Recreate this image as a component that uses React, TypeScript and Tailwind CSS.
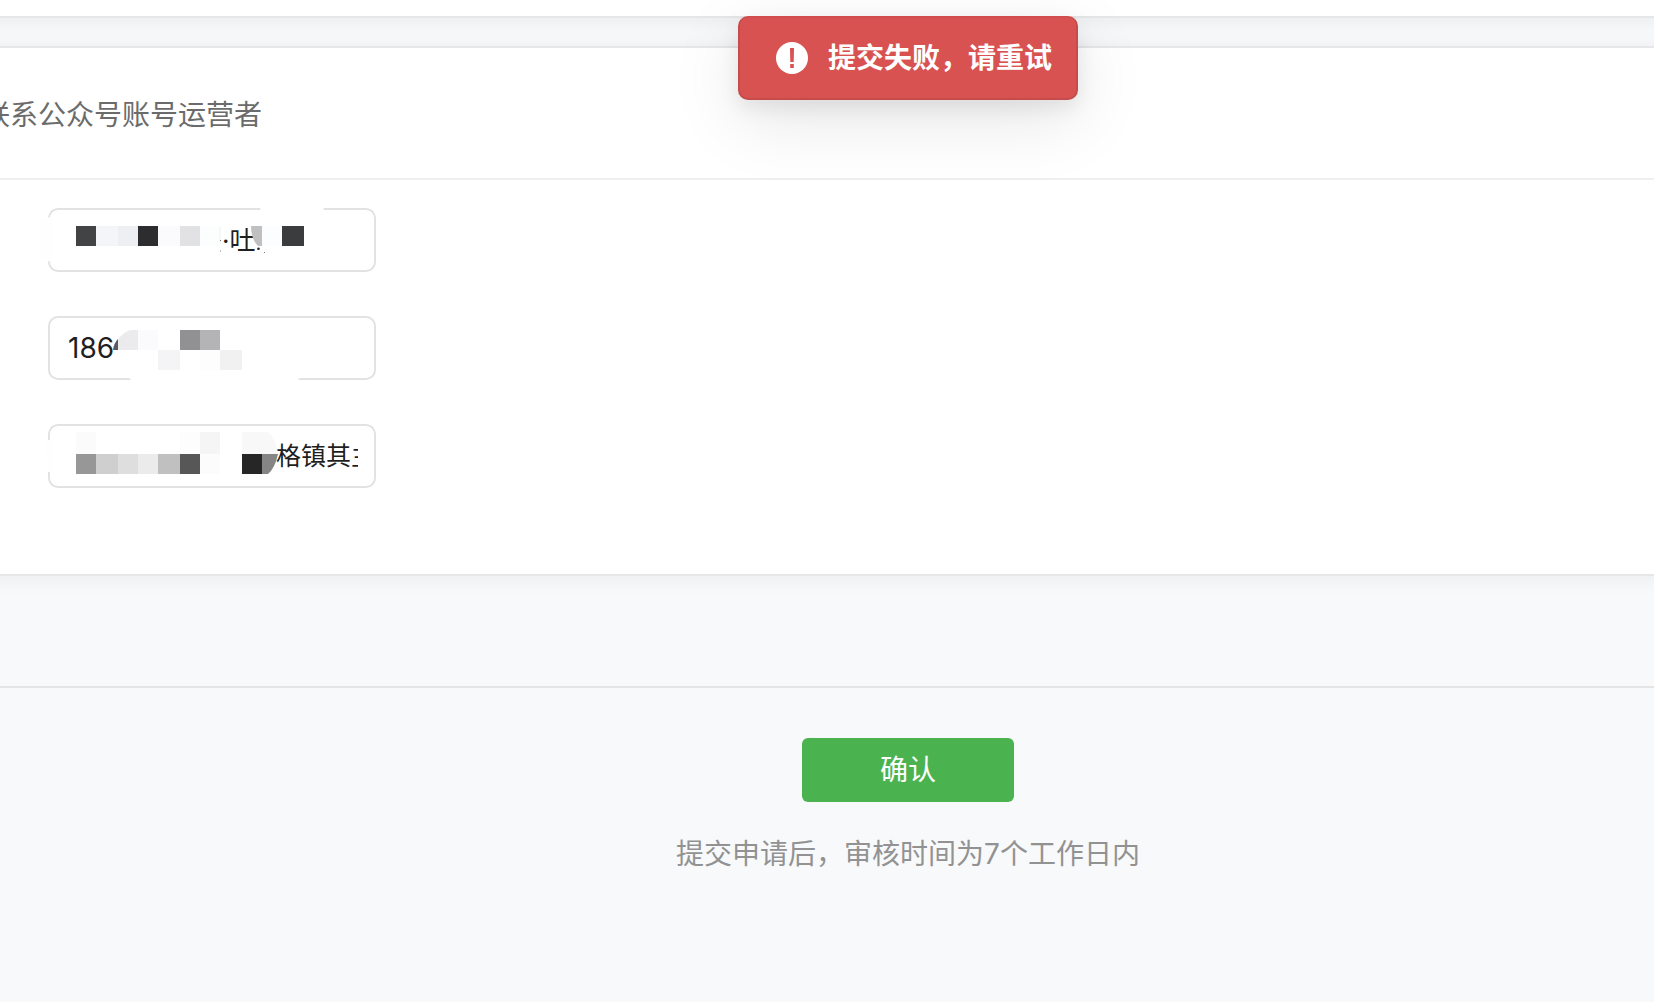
import { useState } from 'react';
import type { FormEvent, ReactNode } from 'react';

interface FieldProps {
  name: string;
  label: string;
  defaultValue: string;
  textStyle: string;
  viewBox: string;
  children: ReactNode;
}

// [x, y, width, height, fill]
type Block = [number, number, number, number, string];

const nameBlocks: Block[] = [
  [76, 226, 20, 20, '#424345'],
  [96, 226, 22, 20, '#f4f5f8'],
  [118, 226, 20, 20, '#eeeff2'],
  [138, 226, 20, 20, '#2d2d2f'],
  [158, 226, 22, 20, '#fbfbfe'],
  [180, 226, 20, 20, '#e2e2e4'],
  [200, 226, 20, 20, '#fcfefe'],
  [262, 226, 20, 20, '#fcfdfe'],
  [282, 226, 22, 20, '#3b3c3e'],
];

const phoneBlocks: Block[] = [
  [138, 330, 20, 20, '#fbfbfe'],
  [180, 330, 20, 20, '#919193'],
  [200, 330, 20, 20, '#b4b4b6'],
  [158, 350, 22, 20, '#f4f4f7'],
  [200, 350, 20, 20, '#fdfdfd'],
  [220, 350, 22, 20, '#f1f1f1'],
];

const addressBlocks: Block[] = [
  [76, 432, 20, 22, '#fbfbfb'],
  [180, 432, 20, 22, '#fdfdfd'],
  [200, 432, 20, 22, '#f5f5f5'],
  [76, 454, 20, 20, '#979797'],
  [96, 454, 22, 20, '#cfcfcf'],
  [118, 454, 20, 20, '#dedede'],
  [138, 454, 20, 20, '#ebebeb'],
  [158, 454, 22, 20, '#c0c0c0'],
  [180, 454, 20, 20, '#575757'],
  [200, 454, 20, 20, '#fcfcfc'],
  [242, 454, 20, 20, '#262626'],
];

function Mosaic({ blocks }: { blocks: Block[] }) {
  return (
    <>
      {blocks.map(([x, y, width, height, fill]) => (
        <rect key={`${x}-${y}`} x={x} y={y} width={width} height={height} fill={fill} />
      ))}
    </>
  );
}

function Field({ name, label, defaultValue, textStyle, viewBox, children }: FieldProps) {
  return (
    <div className="relative w-[328px]">
      <input
        id={name}
        name={name}
        aria-label={label}
        defaultValue={defaultValue}
        className={`block h-16 w-full rounded-[10px] border-2 border-[#e2e2e2] bg-white pr-4 text-[#1f1f1f] outline-none ${textStyle}`}
      />
      <svg
        className="pointer-events-none absolute -top-2 -left-2 h-20 w-[344px]"
        viewBox={viewBox}
        aria-hidden="true"
      >
        {children}
      </svg>
    </div>
  );
}

function Toast({ message }: { message: string }) {
  return (
    <div className="pointer-events-none absolute inset-x-0 top-4 flex justify-center pl-[162px]">
      <div
        role="alert"
        className="flex h-[84px] items-center gap-5 rounded-[10px] border-2 border-[#c64b4b] border-t-[#d04e4e] bg-[#d95252] pr-6 pl-9 text-[28px] leading-10 font-semibold text-white shadow-[0_20px_70px_rgba(0,0,0,0.1),0_8px_20px_rgba(0,0,0,0.08)]"
      >
        <svg className="h-8 w-8" viewBox="0 0 32 32" aria-hidden="true">
          <circle cx="16" cy="16" r="16" fill="#fff" />
          <path d="M14 6h4l-.3 14h-3.400zM14.200 22h3.600v4h-3.600z" fill="#d95252" />
        </svg>
        <span>{message}</span>
      </div>
    </div>
  );
}

export default function App() {
  const [error, setError] = useState('提交失败，请重试');

  const handleSubmit = (e: FormEvent) => {
    e.preventDefault();
    setError('提交失败，请重试');
  };

  return (
    <div className="relative min-h-screen overflow-hidden bg-[#f8f9fb] font-['Inter','Noto_Sans_CJK_SC',sans-serif]">
      <div className="-mx-6 h-[18px] border-b-2 border-[#e5e6e8] bg-white shadow-[0_2px_20px_rgba(0,0,0,0.07)]" />

      <form onSubmit={handleSubmit}>
        <section className="-mx-6 mt-7 border-y-2 border-[#e7e7e9] bg-white px-6 shadow-[0_2px_20px_rgba(0,0,0,0.06)]">
          <h2 className="-mx-[42px] border-b-2 border-[#efefef] px-6 pt-[47px] pb-[43px] text-[28px] leading-10 font-normal whitespace-nowrap text-[#6b6b6b]">
            联系公众号账号运营者
          </h2>

          <div className="flex flex-col gap-11 px-12 pt-7 pb-[86px]">
            <Field
              name="name"
              label="姓名"
              defaultValue="·吐"
              textStyle="pb-1 pl-[172px] text-[26px]"
              viewBox="40 200 344 80"
            >
              <path d="M40 222q6-5 12-5v45q-8-1-12-6z" fill="#fefefe" />
              <path d="M259 212q1-3 3-6h60q1 1 3 6z" fill="#fff" />
              <Mosaic blocks={nameBlocks} />
              <path d="M251 226h11v20h-4q-7-7-7-20z" fill="#c0c0c0" />
              <path d="M220 227v17" stroke="#f0f0f0" />
              <circle cx="258.500" cy="248.800" r="1.300" fill="#222" />
              <path d="M220 240.500h1M220 251h1M264 252.500h1" stroke="#777" />
            </Field>

            <Field
              name="phone"
              label="手机号"
              defaultValue="186"
              textStyle="pl-[18px] text-[28px]"
              viewBox="40 308 344 80"
            >
              <path d="M127 374h176q-3 4-6 7H132q-3-3-5-7z" fill="#fff" />
              <path d="M113 330v36h12v-36z" fill="#fff" />
              <path d="M118 339v11h-5q1-7 5-11z" fill="#5a5a5c" />
              <path d="M118 339q8-9 14-9h6v20h-20z" fill="#ebebed" />
              <Mosaic blocks={phoneBlocks} />
            </Field>

            <Field
              name="address"
              label="地址"
              defaultValue="格镇其主"
              textStyle="pb-1 pl-[226px] text-[25px]"
              viewBox="40 416 344 80"
            >
              <path d="M46 440h6v32h-4q-2-14-2-32z" fill="#fefefe" />
              <Mosaic blocks={addressBlocks} />
              <path d="M242 432h26q8 7 10 22h-36z" fill="#f8f8f8" />
              <path d="M262 454h16q-3 14-10 20h-6z" fill="#858585" />
            </Field>
          </div>
        </section>

        <footer className="mt-[110px] flex flex-col items-center gap-8 border-t-2 border-[#e5e5e5] pt-[50px] pb-12 pl-[162px]">
          <button
            type="submit"
            className="h-16 w-[212px] rounded-md bg-[#4ab350] text-[28px] text-white"
          >
            确认
          </button>
          <p className="text-[28px] leading-10 text-[#929292]">
            提交申请后，审核时间为7个工作日内
          </p>
        </footer>
      </form>

      {error && <Toast message={error} />}
    </div>
  );
}
